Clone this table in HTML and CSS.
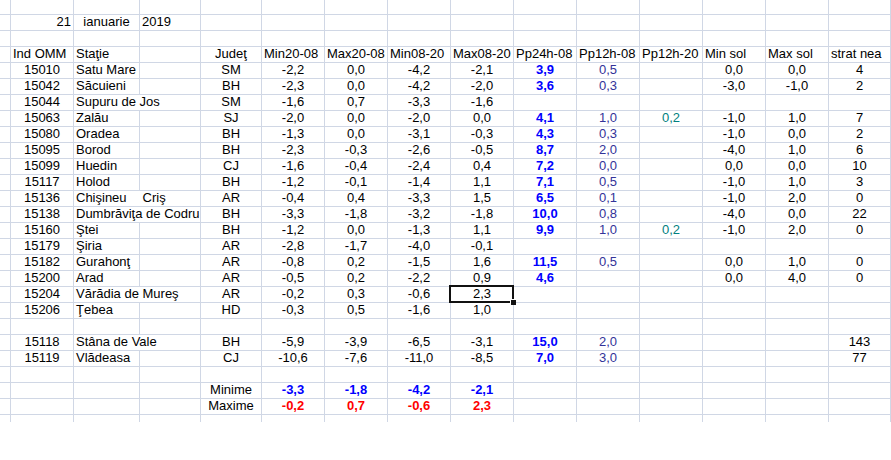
FILE: index.html
```html
<!DOCTYPE html>
<html lang="ro">
<head>
<meta charset="utf-8">
<title>Foaie de calcul</title>
<link rel="stylesheet" href="styles.css">
</head>
<body>
<table class="sheet">
<colgroup>
<col class="w-a"><col class="w-b"><col class="w-c"><col class="w-d"><col class="w-e">
<col class="w-n"><col class="w-n"><col class="w-n"><col class="w-n"><col class="w-n">
<col class="w-n"><col class="w-n"><col class="w-n"><col class="w-n"><col class="w-o">
</colgroup>
<tbody>
<tr class="top"><td></td><td></td><td></td><td></td><td></td><td></td><td></td><td></td><td></td><td></td><td></td><td></td><td></td><td></td><td></td></tr>
<tr><td></td><td class="r">21</td><td>ianuarie</td><td class="l">2019</td><td></td><td></td><td></td><td></td><td></td><td></td><td></td><td></td><td></td><td></td><td></td></tr>
<tr><td></td><td></td><td></td><td></td><td></td><td></td><td></td><td></td><td></td><td></td><td></td><td></td><td></td><td></td><td></td></tr>
<tr class="hdr"><td></td><td>Ind OMM</td><td>Staţie</td><td></td><td class="c">Judeţ</td><td>Min20-08</td><td>Max20-08</td><td>Min08-20</td><td>Max08-20</td><td>Pp24h-08</td><td>Pp12h-08</td><td>Pp12h-20</td><td>Min sol</td><td>Max sol</td><td>strat nea</td></tr>
<tr><td></td><td>15010</td><td class="l">Satu Mare</td><td></td><td>SM</td><td>-2,2</td><td>0,0</td><td>-4,2</td><td>-2,1</td><td class="bb">3,9</td><td class="ind">0,5</td><td></td><td>0,0</td><td>0,0</td><td>4</td></tr>
<tr><td></td><td>15042</td><td class="l">Săcuieni</td><td></td><td>BH</td><td>-2,3</td><td>0,0</td><td>-4,2</td><td>-2,0</td><td class="bb">3,6</td><td class="ind">0,3</td><td></td><td>-3,0</td><td>-1,0</td><td>2</td></tr>
<tr><td></td><td>15044</td><td class="l" colspan="2">Supuru de Jos</td><td>SM</td><td>-1,6</td><td>0,7</td><td>-3,3</td><td>-1,6</td><td></td><td></td><td></td><td></td><td></td><td></td></tr>
<tr><td></td><td>15063</td><td class="l">Zalău</td><td></td><td>SJ</td><td>-2,0</td><td>0,0</td><td>-2,0</td><td>0,0</td><td class="bb">4,1</td><td class="ind">1,0</td><td class="tl">0,2</td><td>-1,0</td><td>1,0</td><td>7</td></tr>
<tr><td></td><td>15080</td><td class="l">Oradea</td><td></td><td>BH</td><td>-1,3</td><td>0,0</td><td>-3,1</td><td>-0,3</td><td class="bb">4,3</td><td class="ind">0,3</td><td></td><td>-1,0</td><td>0,0</td><td>2</td></tr>
<tr><td></td><td>15095</td><td class="l">Borod</td><td></td><td>BH</td><td>-2,3</td><td>-0,3</td><td>-2,6</td><td>-0,5</td><td class="bb">8,7</td><td class="ind">2,0</td><td></td><td>-4,0</td><td>1,0</td><td>6</td></tr>
<tr><td></td><td>15099</td><td class="l">Huedin</td><td></td><td>CJ</td><td>-1,6</td><td>-0,4</td><td>-2,4</td><td>0,4</td><td class="bb">7,2</td><td class="ind">0,0</td><td></td><td>0,0</td><td>0,0</td><td>10</td></tr>
<tr><td></td><td>15117</td><td class="l">Holod</td><td></td><td>BH</td><td>-1,2</td><td>-0,1</td><td>-1,4</td><td>1,1</td><td class="bb">7,1</td><td class="ind">0,5</td><td></td><td>-1,0</td><td>1,0</td><td>3</td></tr>
<tr><td></td><td>15136</td><td class="l" colspan="2">Chişineu<span class="gap">Criş</span></td><td>AR</td><td>-0,4</td><td>0,4</td><td>-3,3</td><td>1,5</td><td class="bb">6,5</td><td class="ind">0,1</td><td></td><td>-1,0</td><td>2,0</td><td>0</td></tr>
<tr><td></td><td>15138</td><td class="l" colspan="2">Dumbrăviţa de Codru</td><td>BH</td><td>-3,3</td><td>-1,8</td><td>-3,2</td><td>-1,8</td><td class="bb">10,0</td><td class="ind">0,8</td><td></td><td>-4,0</td><td>0,0</td><td>22</td></tr>
<tr><td></td><td>15160</td><td class="l">Ştei</td><td></td><td>BH</td><td>-1,2</td><td>0,0</td><td>-1,3</td><td>1,1</td><td class="bb">9,9</td><td class="ind">1,0</td><td class="tl">0,2</td><td>-1,0</td><td>2,0</td><td>0</td></tr>
<tr><td></td><td>15179</td><td class="l">Şiria</td><td></td><td>AR</td><td>-2,8</td><td>-1,7</td><td>-4,0</td><td>-0,1</td><td></td><td></td><td></td><td></td><td></td><td></td></tr>
<tr><td></td><td>15182</td><td class="l">Gurahonţ</td><td></td><td>AR</td><td>-0,8</td><td>0,2</td><td>-1,5</td><td>1,6</td><td class="bb">11,5</td><td class="ind">0,5</td><td></td><td>0,0</td><td>1,0</td><td>0</td></tr>
<tr><td></td><td>15200</td><td class="l">Arad</td><td></td><td>AR</td><td>-0,5</td><td>0,2</td><td>-2,2</td><td>0,9</td><td class="bb">4,6</td><td></td><td></td><td>0,0</td><td>4,0</td><td>0</td></tr>
<tr><td></td><td>15204</td><td class="l" colspan="2">Vărădia de Mureş</td><td>AR</td><td>-0,2</td><td>0,3</td><td>-0,6</td><td class="sel">2,3<div class="selbox"><div class="handle"></div></div></td><td></td><td></td><td></td><td></td><td></td><td></td></tr>
<tr><td></td><td>15206</td><td class="l">Ţebea</td><td></td><td>HD</td><td>-0,3</td><td>0,5</td><td>-1,6</td><td>1,0</td><td></td><td></td><td></td><td></td><td></td><td></td></tr>
<tr><td></td><td></td><td></td><td></td><td></td><td></td><td></td><td></td><td></td><td></td><td></td><td></td><td></td><td></td><td></td></tr>
<tr><td></td><td>15118</td><td class="l" colspan="2">Stâna de Vale</td><td>BH</td><td>-5,9</td><td>-3,9</td><td>-6,5</td><td>-3,1</td><td class="bb">15,0</td><td class="ind">2,0</td><td></td><td></td><td></td><td>143</td></tr>
<tr><td></td><td>15119</td><td class="l">Vlădeasa</td><td></td><td>CJ</td><td>-10,6</td><td>-7,6</td><td>-11,0</td><td>-8,5</td><td class="bb">7,0</td><td class="ind">3,0</td><td></td><td></td><td></td><td>77</td></tr>
<tr><td></td><td></td><td></td><td></td><td></td><td></td><td></td><td></td><td></td><td></td><td></td><td></td><td></td><td></td><td></td></tr>
<tr><td></td><td></td><td></td><td></td><td>Minime</td><td class="bb">-3,3</td><td class="bb">-1,8</td><td class="bb">-4,2</td><td class="bb">-2,1</td><td></td><td></td><td></td><td></td><td></td><td></td></tr>
<tr><td></td><td></td><td></td><td></td><td>Maxime</td><td class="br">-0,2</td><td class="br">0,7</td><td class="br">-0,6</td><td class="br">2,3</td><td></td><td></td><td></td><td></td><td></td><td></td></tr>
<tr class="end"><td></td><td></td><td></td><td></td><td></td><td></td><td></td><td></td><td></td><td></td><td></td><td></td><td></td><td></td><td></td></tr>
</tbody>
</table>
</body>
</html>
```

FILE: styles.css
```css
html, body {
  margin: 0;
  padding: 0;
  background: #ffffff;
}

body {
  font-family: "Liberation Sans", Arial, sans-serif;
  font-size: 13px;
  color: #000000;
}

.sheet {
  border-collapse: separate;
  border-spacing: 0;
  table-layout: fixed;
  width: 891px;
}

.w-a { width: 11px; }
.w-b { width: 63px; }
.w-c { width: 66px; }
.w-d { width: 61px; }
.w-e { width: 61px; }
.w-n { width: 63px; }
.w-o { width: 62px; }

.sheet td {
  border-right: 1px solid #d0d7e5;
  border-bottom: 1px solid #d0d7e5;
  height: 15px;
  padding: 0 2px;
  line-height: 13px;
  vertical-align: top;
  text-align: center;
  white-space: nowrap;
  overflow: visible;
}

.sheet tr.top td {
  height: 14px;
}

.sheet tr.end td {
  height: 7px;
  border-bottom: none;
}

.sheet tr.hdr td { text-align: left; }
.sheet tr.hdr td.c { text-align: center; }

.sheet td.l { text-align: left; }
.sheet td.r { text-align: right; }

.sheet td.bb { color: #0000ff; font-weight: bold; }
.sheet td.br { color: #ff0000; font-weight: bold; }
.sheet td.ind { color: #333399; }
.sheet td.tl { color: #008080; }

.gap { margin-left: 16px; }

.sheet td.sel { position: relative; }

.selbox {
  position: absolute;
  left: -2px;
  top: -2px;
  width: 65px;
  height: 18px;
  box-sizing: border-box;
  border: 2px solid #111111;
}

.handle {
  position: absolute;
  left: 59px;
  top: 12px;
  width: 6px;
  height: 6px;
  box-sizing: border-box;
  background: #111111;
  border-left: 1px solid #ffffff;
  border-top: 1px solid #ffffff;
}
```
